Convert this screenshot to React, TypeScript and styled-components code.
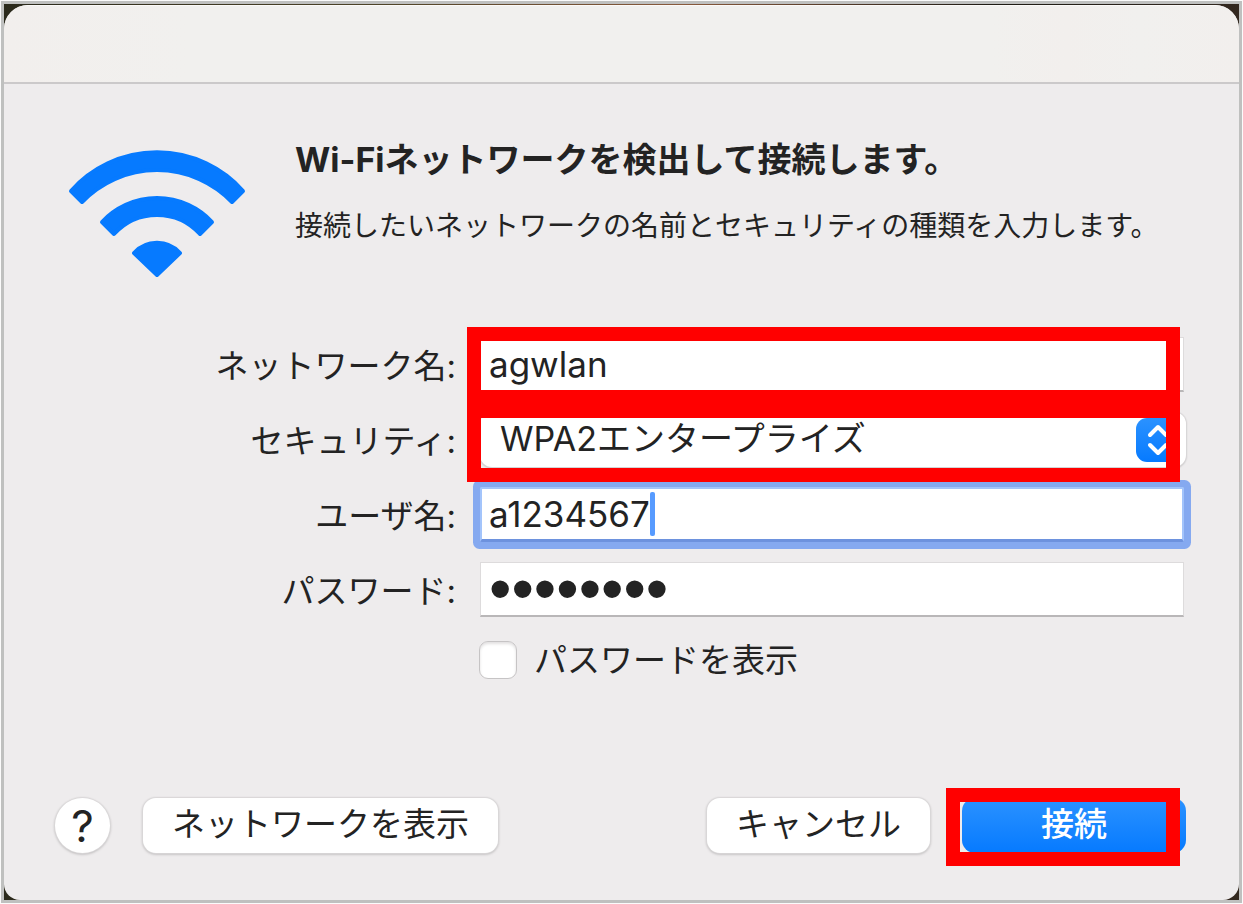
import React, { useState } from "react";
import styled, { createGlobalStyle, css } from "styled-components";

const GlobalStyle = createGlobalStyle`
  *, *::before, *::after { box-sizing: border-box; }
  body {
    margin: 0;
    font-family: Inter, "Noto Sans CJK JP", sans-serif;
    color: #232323;
  }
  input, select, button { font: inherit; color: inherit; }
`;

const TEXT = "33px";
const LARGE_TEXT = "34px";
const BLUE = "#067aff";

const Page = styled.div`
  min-height: 100vh;
  display: flex;
  border: 1px solid #fbfbfb;
`;

const Desktop = styled.div`
  flex: 1;
  display: flex;
  padding-top: 1px;
  border: 3px solid #bfc0bf;
  background: linear-gradient(90deg, #2b2a1c 0%, #4d4327 30%, #8a5a3c 55%, #1d1a14 80%, #33281f 100%);
`;

const Dialog = styled.main`
  flex: 1;
  display: flex;
  flex-direction: column;
  border-radius: 24px 24px 16px 16px;
  background: #eeeced;
  overflow: hidden;
`;

const TitleBar = styled.header`
  height: 79px;
  border-top: 1px solid #fbfaf9;
  border-bottom: 2px solid #cbc9ca;
  background: linear-gradient(90deg, #f2efed, #f1f0ee 15%, #f1f0ee 80%, #f2efed 86%, #f1f0ee 92%, #f2efed);
`;

const Content = styled.form`
  flex: 1;
  display: flex;
  flex-direction: column;
  padding: 56px 53px 47px 51px;
`;

const Intro = styled.section`
  display: flex;
  gap: 49px;
  padding-left: 13px;
`;

const WifiMark = styled.svg`
  flex: none;
  width: 178px;
  height: 128px;
  margin-top: 10px;
  fill: ${BLUE};
  stroke: ${BLUE};
  stroke-width: 4px;
  stroke-linejoin: round;
`;

const IntroText = styled.div`
  display: flex;
  flex-direction: column;
  gap: 30px;
`;

const Title = styled.h1`
  margin: 0;
  font-size: ${LARGE_TEXT};
  line-height: 40px;
  font-weight: 700;
`;

const Description = styled.p`
  margin: 0;
  font-size: 28px;
  line-height: 32px;
`;

const Fields = styled.div`
  display: grid;
  grid-template-columns: 401px 1fr;
  gap: 20px 24px;
  align-items: center;
  margin-top: 59px;
  padding-right: 2px;
`;

const Label = styled.label`
  padding-top: 4px;
  font-size: ${TEXT};
  line-height: 51px;
  text-align: right;
  white-space: nowrap;
`;

const FieldBox = styled.div<{ $focused?: boolean }>`
  position: relative;
  display: flex;
  align-items: center;
  height: 55px;
  padding: 0 8px;
  background: #fff;
  border: 1px solid #dddbdc;
  border-bottom: 2px solid #b9b7b8;
  ${(p) =>
    p.$focused &&
    css`
      padding: 0 7px;
      border: 2px solid #a3c4fb;
      border-bottom: 3px solid #6d92de;
      box-shadow: 0 0 0 7px #85a9f0;
      border-radius: 2px;
    `}
`;

const TextInput = styled.input<{ $fit?: boolean }>`
  min-width: 0;
  height: 44px;
  padding: 0;
  border: 0;
  outline: 0;
  background: transparent;
  font-size: 35px;
  line-height: 44px;
  ${(p) => (p.$fit ? "field-sizing: content;" : "width: 100%;")}
  &[type="password"] {
    font-family: "Liberation Sans", sans-serif;
    font-size: 64px;
  }
`;

const Caret = styled.span`
  width: 5px;
  height: 44px;
  border-radius: 2px;
  background: #579bff;
`;

const SelectBox = styled.div`
  position: relative;
  height: 55px;
  margin-right: -2px;
  border-radius: 12px;
  background: #fff;
  box-shadow: 0 0 1px 1px #d8d6d7, 0 1px 2px #a9a7a8;
`;

const Select = styled.select`
  appearance: none;
  width: 100%;
  height: 52px;
  padding: 0 60px 0 20px;
  border: 0;
  border-radius: 12px;
  outline: 0;
  background: transparent;
  font-size: ${LARGE_TEXT};
`;

const Stepper = styled.svg`
  position: absolute;
  top: 6px;
  right: 6px;
  width: 44px;
  height: 44px;
  pointer-events: none;
`;

const Highlight = styled.span<{ $inset: string }>`
  position: absolute;
  inset: ${(p) => p.$inset};
  border: 14px solid #ff0000;
  pointer-events: none;
  z-index: 1;
`;

const CheckLabel = styled.label`
  display: flex;
  align-items: center;
  gap: 17px;
  margin: 24px 0 0 424px;
  font-size: ${TEXT};
  line-height: 38px;
`;

const Checkbox = styled.input`
  appearance: none;
  width: 38px;
  height: 38px;
  margin: 0;
  border: 1px solid #c6c4c5;
  border-radius: 9px;
  background: #fff;
  box-shadow: inset 0 2px 3px #e2e0e1;
  &:checked { background: ${BLUE}; }
`;

const Footer = styled.footer`
  display: flex;
  align-items: center;
  margin-top: auto;
  padding-top: 40px;
`;

const Button = styled.button<{ $width: number; $primary?: boolean }>`
  width: ${(p) => p.$width}px;
  height: 55px;
  padding: 0 0 4px;
  border: 0;
  border-radius: 13px;
  background: #fff;
  box-shadow: 0 0 1px 1px #dad8d9, 0 1px 3px #a09e9f;
  font-size: ${TEXT};
  line-height: 50px;
  white-space: nowrap;
  ${(p) =>
    p.$primary &&
    css`
      background: linear-gradient(#2b92ff, ${BLUE});
      box-shadow: none;
      color: #fff;
      font-weight: 500;
    `}
`;

const HelpButton = styled(Button)`
  margin-right: 33px;
  padding: 0;
  border-radius: 50%;
  font-size: 44px;
`;

const Actions = styled.div`
  display: flex;
  gap: 32px;
  margin-left: auto;
`;

const PrimarySlot = styled.div`
  position: relative;
`;

export default function App() {
  const [network, setNetwork] = useState("agwlan");
  const [user, setUser] = useState("a1234567");
  const [password, setPassword] = useState("password");
  const [shown, setShown] = useState(false);

  return (
    <Page>
      <GlobalStyle />
      <Desktop>
        <Dialog>
          <TitleBar />
          <Content onSubmit={(e) => e.preventDefault()}>
            <Intro>
              <WifiMark viewBox="0 0 178 128" aria-hidden="true">
                <path d="M3 41 A115 115 0 0 1 175 41 L164 52 A104 104 0 0 0 14 52 Z" />
                <path d="M34 72 A75 75 0 0 1 144 72 L132 84 A58 58 0 0 0 46 84 Z" />
                <path d="M66 103 A31 31 0 0 1 112 103 L89 125 Z" />
              </WifiMark>
              <IntroText>
                <Title>Wi-Fiネットワークを検出して接続します。</Title>
                <Description>
                  接続したいネットワークの名前とセキュリティの種類を入力します。
                </Description>
              </IntroText>
            </Intro>

            <Fields>
              <Label htmlFor="network">ネットワーク名:</Label>
              <FieldBox>
                <TextInput id="network" value={network} onChange={(e) => setNetwork(e.target.value)} />
                <Highlight $inset="-11px 3px -14px -14px" />
              </FieldBox>

              <Label htmlFor="security">セキュリティ:</Label>
              <SelectBox>
                <Select id="security" defaultValue="wpa2">
                  <option value="wpa2">WPA2エンタープライズ</option>
                </Select>
                <Stepper viewBox="0 0 44 44" aria-hidden="true">
                  <defs>
                    <linearGradient id="stepper" x1="0" y1="0" x2="0" y2="1">
                      <stop offset="0" stopColor="#2b92ff" />
                      <stop offset="1" stopColor={BLUE} />
                    </linearGradient>
                  </defs>
                  <rect width="44" height="44" rx="11" fill="url(#stepper)" />
                  <path
                    d="M14 17 L22 9 L30 17 M14 27 L22 35 L30 27"
                    fill="none"
                    stroke="#fff"
                    strokeWidth="4"
                    strokeLinecap="round"
                    strokeLinejoin="round"
                  />
                </Stepper>
                <Highlight $inset="-8px 6px -15px -13px" />
              </SelectBox>

              <Label htmlFor="user">ユーザ名:</Label>
              <FieldBox $focused>
                <TextInput id="user" $fit value={user} onChange={(e) => setUser(e.target.value)} />
                <Caret />
              </FieldBox>

              <Label htmlFor="password">パスワード:</Label>
              <FieldBox>
                <TextInput
                  id="password"
                  type={shown ? "text" : "password"}
                  value={password}
                  onChange={(e) => setPassword(e.target.value)}
                />
              </FieldBox>
            </Fields>

            <CheckLabel>
              <Checkbox type="checkbox" checked={shown} onChange={(e) => setShown(e.target.checked)} />
              パスワードを表示
            </CheckLabel>

            <Footer>
              <HelpButton type="button" $width={55}>?</HelpButton>
              <Button type="button" $width={355}>ネットワークを表示</Button>
              <Actions>
                <Button type="button" $width={223}>キャンセル</Button>
                <PrimarySlot>
                  <Button type="submit" $width={224} $primary>接続</Button>
                  <Highlight $inset="-10px 6px -13px -16px" />
                </PrimarySlot>
              </Actions>
            </Footer>
          </Content>
        </Dialog>
      </Desktop>
    </Page>
  );
}
